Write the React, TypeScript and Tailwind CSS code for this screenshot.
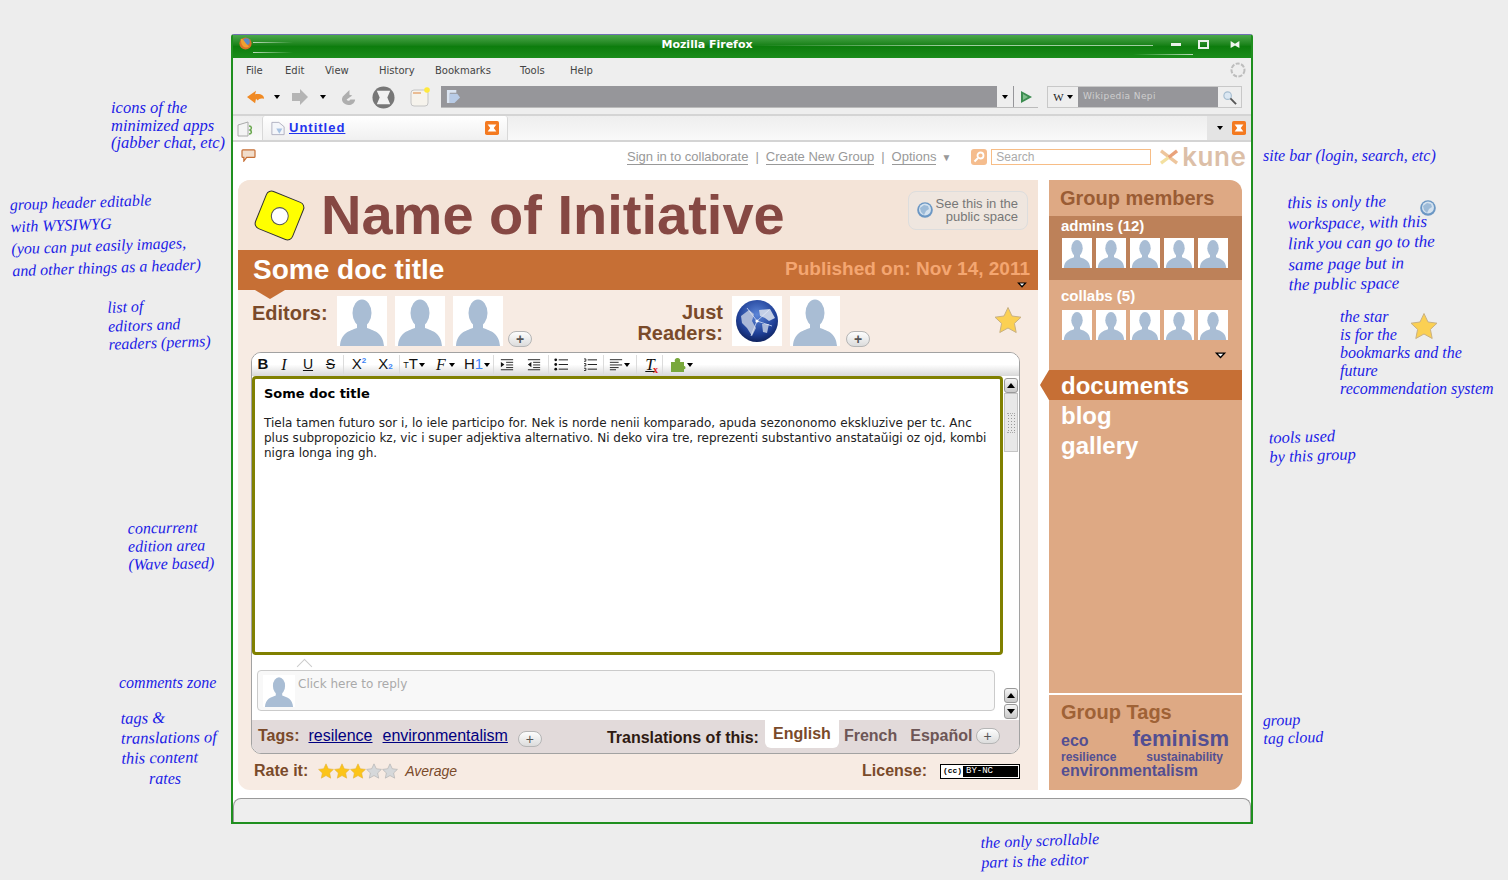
import type { ReactNode } from "react"

function Avatar({ className }: { className: string }) {
  return (
    <svg viewBox="0 0 50 50" className={className}>
      <rect width="50" height="50" fill="#fff" />
      <ellipse cx="25" cy="17" rx="9.500" ry="13.500" fill="#a9bdd4" />
      <path d="M20 26 L20 32 C12 35 4 37 3 50 L47 50 C46 37 38 35 30 32 L30 26 Z" fill="#a9bdd4" />
    </svg>
  )
}

function Globe({ className }: { className: string }) {
  return (
    <svg viewBox="0 0 50 50" className={className}>
      <defs>
        <radialGradient id="gl" cx="50%" cy="35%" r="65%">
          <stop offset="0%" stopColor="#5c86d8" />
          <stop offset="70%" stopColor="#1f3f96" />
          <stop offset="100%" stopColor="#10235f" />
        </radialGradient>
      </defs>
      <rect width="50" height="50" fill="#fff" />
      <circle cx="25" cy="25" r="21" fill="url(#gl)" />
      <path d="M9 20 L17 14 L22 18 L20 25 L24 32 L20 40 L15 32 L10 27 Z" fill="#aab8d8" />
      <path d="M27 14 L38 13 L43 22 L37 25 L33 22 L28 20 Z" fill="#c4cfe5" />
      <path d="M30 28 L37 28 L35 37 L31 36 Z" fill="#aab8d8" />
      <path d="M25 25 L15 12 M25 25 L37 14 M25 25 L19 40 M25 25 L40 30" stroke="#e8eefb" strokeWidth="0.7" />
      <circle cx="25" cy="25" r="1.600" fill="#fff" />
    </svg>
  )
}

function SmallGlobe({ className }: { className: string }) {
  return (
    <svg viewBox="0 0 16 16" className={className}>
      <circle cx="8" cy="8" r="7.800" fill="#6b97c4" />
      <circle cx="8" cy="7.500" r="6" fill="#d4e2ef" />
      <path d="M3 6 L7 3 L11 4 L12 7 L9 9 L7 13 L4 10 Z" fill="#9dbbd8" />
    </svg>
  )
}

function Star({ className, fill = "#fbd053", stroke = "#c9b183" }: { className: string; fill?: string; stroke?: string }) {
  return (
    <svg viewBox="0 0 28 28" className={className}>
      <path
        d="M14 1.500 L18 10 L27 11.200 L20.400 17.400 L22.200 26.500 L14 22 L5.800 26.500 L7.600 17.400 L1 11.200 L10 10 Z"
        fill={fill}
        stroke={stroke}
        strokeWidth="1"
      />
    </svg>
  )
}

function Plus() {
  return (
    <span className="flex h-[16px] w-[24px] items-center justify-center rounded-full border border-[#b5b5b5] bg-gradient-to-b from-[#fdfdfd] to-[#dcdcdc] text-[14px] leading-none text-[#555]">
      +
    </span>
  )
}

function Caret({ className = "" }: { className?: string }) {
  return <span className={`inline-block h-0 w-0 border-x-[3px] border-t-[4px] border-x-transparent border-t-black ${className}`} />
}

function Drop({ className }: { className: string }) {
  return (
    <svg viewBox="0 0 14 8" className={className}>
      <path d="M0.500 0.500 L13.500 0.500 L7 7.500 Z" fill="#000" />
      <path d="M4 2 L10 2 L7 5 Z" fill="#fff" />
    </svg>
  )
}

function OrangeClose({ className }: { className: string }) {
  return (
    <svg viewBox="0 0 16 16" className={className}>
      <rect width="16" height="16" rx="2" fill="#f47a20" />
      <path d="M3 4 H13 L10 8 L13 12 H3 L6 8 Z" fill="#fff" />
    </svg>
  )
}

function Lines({ className, kind }: { className: string; kind: "in" | "out" | "ul" | "ol" | "align" }) {
  return (
    <svg viewBox="0 0 16 14" className={className} stroke="#111" strokeWidth="1">
      {kind === "in" && (
        <>
          <path d="M1 1.500 H15 M7 4.500 H15 M7 7.500 H15 M7 10.500 H15 M1 13 H15" />
          <path d="M1 4 L5 7 L1 10 Z" fill="#111" stroke="none" />
        </>
      )}
      {kind === "out" && (
        <>
          <path d="M1 1.500 H15 M7 4.500 H15 M7 7.500 H15 M7 10.500 H15 M1 13 H15" />
          <path d="M5 4 L1 7 L5 10 Z" fill="#111" stroke="none" />
        </>
      )}
      {kind === "ul" && (
        <>
          <path d="M5 2 H15 M5 7 H15 M5 12 H15" />
          <circle cx="1.800" cy="2" r="1.500" fill="#111" stroke="none" />
          <circle cx="1.800" cy="7" r="1.500" fill="#111" stroke="none" />
          <circle cx="1.800" cy="12" r="1.500" fill="#111" stroke="none" />
        </>
      )}
      {kind === "ol" && (
        <>
          <path d="M5 2 H15 M5 7 H15 M5 12 H15" />
          <path d="M1 1 H3 V3.500 H1 M1 6 H3 V8.500 H1 M1 11 H3 V13.500 H1" strokeWidth="0.9" fill="none" />
        </>
      )}
      {kind === "align" && <path d="M1 1.500 H15 M1 4.500 H11 M1 7.500 H15 M1 10.500 H11 M1 13 H8" />}
    </svg>
  )
}

function Sep({ className }: { className: string }) {
  return <span className={`h-[19px] w-px bg-[#dcdcdc] ${className}`} />
}

function Tool({ className = "", children }: { className?: string; children: ReactNode }) {
  return <span className={`flex h-[20px] items-center justify-center ${className}`}>{children}</span>
}

function EditorToolbar() {
  return (
    <div className="flex h-[23px] items-center rounded-t-[9px] bg-gradient-to-b from-white via-white to-[#d8d8d8] pl-[5px] font-['Liberation_Sans',sans-serif] text-[#111]">
      <Tool className="w-[12px] text-[15px] font-bold">B</Tool>
      <Tool className="ml-[10px] w-[10px] font-['Liberation_Serif',serif] text-[16px] italic">I</Tool>
      <Tool className="ml-[14px] w-[10px] text-[14px] underline">U</Tool>
      <Tool className="ml-[11px] w-[13px] text-[14px] line-through">S</Tool>
      <Sep className="ml-[6px]" />
      <Tool className="ml-[7px] w-[16px] text-[15px]">
        X<sup className="text-[8px] font-bold text-[#3b82f6]">2</sup>
      </Tool>
      <Tool className="ml-[11px] w-[15px] text-[15px]">
        X<sub className="text-[8px] font-bold text-[#3b82f6]">2</sub>
      </Tool>
      <Sep className="ml-[6px]" />
      <Tool className="ml-[5px] w-[18px] text-[15px]">
        <span className="mt-[3px] text-[9px]">T</span>T<Caret className="ml-[1px] border-t-[#888]" />
      </Tool>
      <Tool className="ml-[13px] w-[19px] font-['Liberation_Serif',serif] text-[16px] italic">
        F<Caret className="ml-[3px] border-t-[#888]" />
      </Tool>
      <Tool className="ml-[9px] w-[26px] text-[15px]">
        H<span className="text-[#3b82f6]">1</span>
        <Caret className="ml-[1px] border-t-[#888]" />
      </Tool>
      <Sep className="ml-[3px]" />
      <Tool className="ml-[6px] w-[14px]">
        <Lines className="h-[13px] w-[14px]" kind="in" />
      </Tool>
      <Tool className="ml-[13px] w-[14px]">
        <Lines className="h-[13px] w-[14px]" kind="out" />
      </Tool>
      <Sep className="ml-[7px]" />
      <Tool className="ml-[4px] w-[17px]">
        <Lines className="h-[13px] w-[17px]" kind="ul" />
      </Tool>
      <Tool className="ml-[12px] w-[17px]">
        <Lines className="h-[13px] w-[17px]" kind="ol" />
      </Tool>
      <Sep className="ml-[4px]" />
      <Tool className="ml-[5px] w-[21px]">
        <Lines className="h-[13px] w-[15px]" kind="align" />
        <Caret className="ml-[1px] border-t-[#888]" />
      </Tool>
      <Sep className="ml-[6px]" />
      <Tool className="relative ml-[6px] w-[14px] font-['Liberation_Serif',serif] text-[17px] italic">
        <span className="underline">T</span>
        <span className="absolute -right-[1px] bottom-0 text-[10px] font-bold not-italic leading-none text-[#e02020]">x</span>
      </Tool>
      <Sep className="ml-[5px]" />
      <Tool className="ml-[7px] w-[23px]">
        <svg viewBox="0 0 16 16" className="h-[16px] w-[16px]">
          <path
            d="M1 5 H5 C4 2 6 1 7.500 1 C9 1 11 2 10 5 H14 V9 C16 8.500 16 13 14 12 V15 H1 Z"
            fill="#79a83c"
          />
        </svg>
        <Caret className="ml-[1px] border-t-[#888]" />
      </Tool>
    </div>
  )
}

function Scrollbtn({ up, className = "" }: { up?: boolean; className?: string }) {
  return (
    <span className={`flex h-[15px] w-[14px] items-center justify-center rounded-[3px] border border-[#999] bg-gradient-to-b from-[#f4f4f4] to-[#c9c9c9] ${className}`}>
      <span className={`h-0 w-0 border-x-[4px] border-x-transparent ${up ? "border-b-[5px] border-b-black" : "border-t-[5px] border-t-black"}`} />
    </span>
  )
}

function Editor() {
  return (
    <div className="ml-[13px] mr-[18px] flex h-[402px] flex-col rounded-[10px] border border-[#a2a2a2] bg-white">
      <EditorToolbar />
      <div className="flex h-[279px]">
        <div className="h-full w-[751px] rounded-[4px] border-[3px] border-[#808000] px-[9px] pt-[7px] font-['DejaVu_Sans',sans-serif] text-[12px] leading-[15px] text-[#222]">
          <div className="text-[13px] font-bold text-black">Some doc title</div>
          <p className="mt-[15px]">
            Tiela tamen futuro sor i, lo iele participo for. Nek is norde nenii komparado, apuda sezononomo ekskluzive per tc. Anc plus subpropozicio kz, vic i super adjektiva alternativo. Ni deko vira tre, reprezenti substantivo anstataŭigi oz ojd, kombi nigra longa ing gh.
          </p>
        </div>
        <div className="flex w-[16px] flex-col items-center pt-[2px]">
          <Scrollbtn up />
          <span className="flex h-[59px] w-[14px] items-center justify-center border border-[#c5c5c5] bg-[#e8e8e8]">
            <span className="h-[20px] w-[8px] border-y border-dotted border-[#aaa] bg-[radial-gradient(#999_0.6px,transparent_0.8px)] bg-[length:3px_3px]" />
          </span>
        </div>
      </div>
      <div className="relative h-[65px]">
        <span className="absolute left-[47px] top-[6px] h-[11px] w-[11px] rotate-45 border-l border-t border-[#ccc] bg-white" />
        <div className="absolute left-[5px] top-[15px] flex h-[41px] w-[738px] rounded-[4px] border border-[#cbcbcb] bg-[#f8f8f8] pl-[5px]">
          <Avatar className="h-[32px] w-[32px] self-center" />
          <span className="ml-[3px] mt-[4px] font-['DejaVu_Sans',sans-serif] text-[12px] text-[#aaa]">Click here to reply</span>
        </div>
        <div className="absolute right-[1px] top-[33px] flex flex-col gap-px">
          <Scrollbtn up />
          <Scrollbtn />
        </div>
      </div>
      <div className="flex h-[33px] items-center rounded-b-[9px] bg-[#e2dada] pb-px pl-[6px] font-['Liberation_Sans',sans-serif] text-[16px]">
        <span className="font-bold text-[#7a4a2a]">Tags:</span>
        <a className="ml-[9px] text-[#000080] underline">resilence</a>
        <a className="ml-[10px] text-[#000080] underline">environmentalism</a>
        <span className="ml-[10px] mt-[5px]">
          <Plus />
        </span>
        <span className="ml-[65px] mt-[3px] font-bold text-[#2f1a12]">Translations of this:</span>
        <span className="ml-[6px] flex h-[28px] w-[74px] items-center justify-center self-start rounded-b-[6px] bg-white font-bold text-[#7a4a2a]">English</span>
        <span className="ml-[5px] font-bold text-[#6d5656]">French</span>
        <span className="ml-[13px] font-bold text-[#6d5656]">Español</span>
        <span className="ml-[3px]">
          <Plus />
        </span>
      </div>
    </div>
  )
}

function LeftPanel() {
  return (
    <div className="flex w-[800px] flex-col rounded-bl-[12px] rounded-tl-[12px] bg-[#f7ebe3] font-['Liberation_Sans',sans-serif]">
      <div className="flex h-[70px] shrink-0 items-center rounded-tl-[12px] bg-[#f4e4d8] pl-[21px] pr-[10px]">
        <span className="flex h-[41px] w-[41px] rotate-[22deg] items-center justify-center rounded-[6px] border border-[#333] bg-[#ffff00]">
          <span className="h-[18px] w-[18px] rounded-full border border-[#555] bg-white" />
        </span>
        <h1 className="ml-[21px] text-[56px] font-bold leading-none text-[#864843]">Name of Initiative</h1>
        <div className="mb-[10px] ml-auto flex h-[39px] w-[120px] items-center rounded-[8px] border border-[#dddddd] bg-[#efe6df] pl-[8px] pr-[9px]">
          <SmallGlobe className="h-[16px] w-[16px] shrink-0" />
          <span className="flex-1 text-right text-[13px] leading-[13px] text-[#777]">See this in the public space</span>
        </div>
      </div>
      <div className="relative flex h-[40px] shrink-0 items-center justify-between bg-[#c66f35] pb-px pl-[15px] pr-[8px] font-bold">
        <span className="text-[28px] text-white">Some doc title</span>
        <span className="text-[19px] text-[#f4a671]">Published on: Nov 14, 2011</span>
        <Drop className="absolute bottom-[2px] right-[10px] h-[6px] w-[12px]" />
        <span className="absolute left-[17px] top-[40px] h-0 w-0 border-x-[15px] border-t-[9px] border-x-transparent border-t-[#c66f35]" />
      </div>
      <div className="flex h-[62px] shrink-0 items-start pt-[6px] font-bold text-[#7a4a2a]">
        <span className="ml-[14px] mt-[2px] w-[85px] text-[20px]">Editors:</span>
        <Avatar className="h-[50px] w-[50px]" />
        <Avatar className="ml-[8px] h-[50px] w-[50px]" />
        <Avatar className="ml-[8px] h-[50px] w-[50px]" />
        <span className="ml-[5px] mt-[35px]">
          <Plus />
        </span>
        <span className="ml-[104px] w-[87px] pt-[6px] text-right text-[20px] leading-[21px]">Just Readers:</span>
        <Globe className="ml-[9px] h-[50px] w-[50px]" />
        <Avatar className="ml-[8px] h-[50px] w-[50px]" />
        <span className="ml-[6px] mt-[35px]">
          <Plus />
        </span>
        <Star className="ml-[124px] mt-[10px] h-[28px] w-[28px]" />
      </div>
      <Editor />
      <div className="flex h-[36px] shrink-0 items-center px-[16px] pb-[2px] pr-[18px] text-[16px] font-bold text-[#7a4a2a]">
        <span>Rate it:</span>
        <span className="ml-[10px] flex">
          {[0, 1, 2].map((i) => (
            <Star key={i} className="h-[16px] w-[16px]" fill="#fcc419" stroke="#e3b23a" />
          ))}
          {[3, 4].map((i) => (
            <Star key={i} className="h-[16px] w-[16px]" fill="#d6d8da" stroke="#aaa" />
          ))}
        </span>
        <span className="ml-[7px] text-[14px] font-normal italic">Average</span>
        <span className="ml-auto">License:</span>
        <span className="ml-[13px] flex h-[15px] w-[80px] items-center border border-black bg-white p-px font-['Liberation_Mono',monospace] text-[9px] font-normal leading-none text-white">
          <span className="flex h-full w-[21px] items-center justify-center text-[8px] font-bold text-black">(cc)</span>
          <span className="flex h-full flex-1 items-center bg-black pl-[3px]">BY-NC</span>
        </span>
      </div>
    </div>
  )
}

function Members({ className }: { className: string }) {
  return (
    <div className={className}>
      {[0, 1, 2, 3, 4].map((i) => (
        <Avatar key={i} className="h-[30px] w-[30px]" />
      ))}
    </div>
  )
}

function Sidebar() {
  return (
    <div className="flex w-[193px] flex-col overflow-hidden rounded-r-[12px] bg-[#dea984] font-['Liberation_Sans',sans-serif] font-bold">
      <div className="flex h-[36px] items-center pb-px pl-[11px] text-[20px] text-[#9a5c34]">Group members</div>
      <div className="h-[64px] bg-[#bd8159] pl-[12px] pt-px text-[15px] leading-[18px] text-white">
        admins (12)
        <Members className="ml-px mt-[3px] flex gap-[4px]" />
      </div>
      <div className="relative h-[90px] pl-[12px] pt-[7px] text-[15px] leading-[18px] text-white">
        collabs (5)
        <Members className="ml-px mt-[5px] flex gap-[4px]" />
        <Drop className="absolute bottom-[11px] right-[15px] h-[7px] w-[13px]" />
      </div>
      <div className="flex h-[30px] items-center bg-[#c66f35] pl-[12px] pt-px text-[24px] text-white">documents</div>
      <div className="flex h-[30px] items-center pl-[12px] pt-px text-[24px] text-white">blog</div>
      <div className="flex h-[30px] items-center pl-[12px] pt-px text-[24px] text-white">gallery</div>
      <div className="mt-auto border-t-2 border-white pl-[12px] pt-[5px] text-[#534f92]">
        <div className="text-[20px] leading-[24px] text-[#9f6236]">Group Tags</div>
        <div className="mr-[13px] mt-px flex items-baseline justify-between">
          <span className="text-[16px]">eco</span>
          <span className="text-[22px] leading-[28px]">feminism</span>
        </div>
        <div className="mr-[19px] -mt-[3px] flex justify-between text-[12px] leading-[14px]">
          <span>resilience</span>
          <span>sustainability</span>
        </div>
        <div className="text-[16px] leading-[14px]">environmentalism</div>
        <div className="h-[12px]" />
      </div>
    </div>
  )
}

function BrowserChrome() {
  return (
    <>
      <div className="relative flex h-[23px] shrink-0 items-center justify-center bg-gradient-to-b from-[#4aa84a] via-[#0d7d0d] to-[#1b8d1b]">
        <svg viewBox="0 0 16 16" className="absolute left-[5px] top-[1px] h-[15px] w-[15px]">
          <circle cx="8" cy="8" r="6.500" fill="#d9722a" />
          <circle cx="9" cy="6" r="3.500" fill="#5a8ac8" />
          <path d="M3 3 C6 2 7 8 12 11 C8 14 3 12 3 3 Z" fill="#f0a030" />
        </svg>
        <span className="absolute left-[20px] top-[7px] h-px w-[40px] bg-gradient-to-r from-white to-transparent opacity-70" />
        <span className="absolute left-[20px] top-[17px] h-px w-[40px] bg-gradient-to-r from-white to-transparent opacity-70" />
        <span className="absolute left-[520px] top-[10px] h-px w-[400px] bg-gradient-to-r from-transparent via-white to-white opacity-60" />
        <span className="absolute left-[900px] bottom-[3px] h-px w-[60px] bg-gradient-to-r from-transparent to-white opacity-70" />
        <span className="mb-[3px] ml-[-70px] font-['DejaVu_Sans',sans-serif] text-[11px] font-bold text-white">Mozilla Firefox</span>
        <span className="absolute right-[11px] top-[5px] flex items-center">
          <span className="h-[3px] w-[10px] bg-[#e8f2e8]" />
          <span className="ml-[17px] h-[9px] w-[11px] border-2 border-[#e8f2e8]" />
          <svg viewBox="0 0 10 8" className="ml-[21px] h-[7px] w-[10px]">
            <path d="M0 0 L5 3 L10 0 V8 L5 5 L0 8 Z" fill="#f0f6f0" />
          </svg>
        </span>
      </div>
      <div className="relative flex h-[26px] shrink-0 items-center bg-[#eeeeee] pb-[2px] font-['DejaVu_Sans',sans-serif] text-[10px] text-[#444]">
        <span className="ml-[13px] w-[39px]">File</span>
        <span className="w-[40px]">Edit</span>
        <span className="w-[54px]">View</span>
        <span className="w-[56px]">History</span>
        <span className="w-[85px]">Bookmarks</span>
        <span className="w-[50px]">Tools</span>
        <span>Help</span>
        <svg viewBox="0 0 18 18" className="absolute right-[4px] top-[3px] h-[18px] w-[18px]">
          <circle cx="9" cy="9" r="6.500" fill="none" stroke="#bdbdbd" strokeWidth="2" strokeDasharray="4 1.500" />
        </svg>
      </div>
      <div className="flex h-[30px] shrink-0 items-center bg-[#eeeeee] pb-[4px]">
        <svg viewBox="0 0 20 16" className="ml-[14px] h-[16px] w-[18px]">
          <path d="M0 8 L10 1 L9 5 C15 4 19 6 19 10 C15 9 13 10 12 12 L10 10 L9 15 Z" fill="#f08a24" />
        </svg>
        <Caret className="ml-[9px]" />
        <svg viewBox="0 0 16 16" className="ml-[12px] h-[16px] w-[16px]">
          <path d="M0 4 H8 V0 L16 8 L8 16 V12 H0 Z" fill="#b4b4b4" />
        </svg>
        <Caret className="ml-[12px] border-t-[#888]" />
        <svg viewBox="0 0 18 18" className="ml-[14px] h-[19px] w-[17px]">
          <path d="M10 1 L3 8 C0 13 5 17 9 17 C13 17 16 14 16 11 H11 C10 13 8 13 7 11 L13 7 L10 6 Z" fill="#aeaeae" />
        </svg>
        <svg viewBox="0 0 24 24" className="ml-[15px] h-[23px] w-[23px]">
          <circle cx="12" cy="12" r="11.500" fill="#777" />
          <path d="M5 5 H19 L16 12 L19 19 H5 L8 12 Z" fill="#f2f2f2" />
        </svg>
        <svg viewBox="0 0 20 20" className="ml-[15px] h-[20px] w-[20px]">
          <rect x="1" y="3" width="17" height="16" rx="3" fill="#f6f3ec" stroke="#c4c4c4" />
          <path d="M3 6 H11" stroke="#e29858" strokeWidth="1.200" />
          <circle cx="17" cy="3" r="2.800" fill="#ffe93b" />
        </svg>
        <div className="ml-[11px] flex h-[22px] w-[597px] items-center border-b border-[#bbb] bg-[#96969a]">
          <svg viewBox="0 0 16 16" className="ml-[5px] h-[15px] w-[15px]">
            <path d="M1 1 H11 V4 H4 V15 H1 Z" fill="#dbe5f2" />
            <path d="M4 5 H12 L15 9 L9 15 H4 Z" fill="#b8cbe6" />
          </svg>
          <span className="ml-auto flex h-full w-[16px] items-center justify-center bg-[#eeeeee]">
            <Caret className="border-t-[#444]" />
          </span>
          <span className="ml-px flex h-full w-[24px] items-center justify-center bg-[#eeeeee]">
            <svg viewBox="0 0 12 12" className="h-[12px] w-[12px]">
              <path d="M1 0 L12 6 L1 12 Z" fill="#3c8c50" />
              <path d="M3 3 V9 L8 6 Z" fill="#7fbf8c" />
            </svg>
          </span>
        </div>
        <div className="ml-[9px] flex h-[22px] w-[195px] items-center border border-[#c8c8c8] bg-[#96969a]">
          <span className="flex h-full w-[30px] items-center justify-center gap-[3px] bg-[#eeeeee] font-['Liberation_Serif',serif] text-[11px] text-[#222]">
            W<Caret />
          </span>
          <span className="ml-[5px] font-['DejaVu_Sans',sans-serif] text-[9px] tracking-[0.4px] text-[#cfcfcf]">Wikipedia Nepi</span>
          <span className="ml-auto flex h-full w-[23px] items-center justify-center bg-[#eeeeee]">
            <svg viewBox="0 0 16 16" className="h-[15px] w-[15px]">
              <circle cx="6" cy="6" r="4" fill="#dbe7f2" stroke="#a6bdd0" strokeWidth="1.200" />
              <path d="M9 9 L15 15" stroke="#555" strokeWidth="2" />
            </svg>
          </span>
        </div>
      </div>
      <div className="flex h-[28px] shrink-0 items-end border-y-2 border-y-[#d4d4d4] bg-gradient-to-b from-[#eeeeee] to-[#f9f9f9] pl-[4px]">
        <svg viewBox="0 0 18 16" className="mb-[3px] h-[16px] w-[18px]">
          <path d="M1 4 L11 1 V15 H1 Z" fill="#f4f4f4" stroke="#aaa" />
          <path d="M12 5 C15 5 15 8 13 9 C15 10 15 13 12 13" stroke="#6aa84f" strokeWidth="1.500" fill="none" />
        </svg>
        <div className="ml-[7px] flex h-[24px] w-[246px] items-center rounded-t-[3px] border-x border-x-[#d8d8d8] bg-gradient-to-b from-white to-[#f0f0f0] pl-[8px]">
          <svg viewBox="0 0 16 16" className="h-[15px] w-[14px]">
            <path d="M1 1 H9 L15 6 V15 H1 Z" fill="#f4f6fa" stroke="#aab" />
            <path d="M6 8 H13 L9.500 14 Z" fill="#a7c2e2" />
          </svg>
          <a className="ml-[4px] font-['Liberation_Sans',sans-serif] text-[13px] font-bold tracking-[1px] text-[#2233ee] underline">Untitled</a>
          <OrangeClose className="ml-auto mr-[8px] h-[14px] w-[14px]" />
        </div>
        <div className="ml-auto flex h-[24px] items-center bg-[#e4e4e4] pl-[10px] pr-[5px]">
          <Caret />
          <OrangeClose className="ml-[9px] h-[14px] w-[14px]" />
        </div>
      </div>
    </>
  )
}

function SiteBar() {
  return (
    <div className="flex h-[30px] shrink-0 items-center pl-[8px] font-['Liberation_Sans',sans-serif] text-[13px] text-[#999]">
      <svg viewBox="0 0 16 14" className="mb-[3px] h-[13px] w-[15px]">
        <path d="M2 1 H14 C15 1 15 2 15 2 V8 C15 9 14 9 14 9 H6 L3 13 V9 H2 C1 9 1 8 1 8 V2 C1 2 1 1 2 1 Z" fill="#f1ddcb" stroke="#c66f35" strokeWidth="1.300" />
      </svg>
      <a className="ml-[371px] border-b border-[#999] leading-[14px]">Sign in to collaborate</a>
      <span className="mx-[7px]">|</span>
      <a className="border-b border-[#999] leading-[14px]">Create New Group</a>
      <span className="mx-[7px]">|</span>
      <a className="border-b border-[#999] leading-[14px]">Options</a>
      <span className="ml-[5px] text-[10px]">▼</span>
      <span className="ml-[20px] flex h-[16px] w-[16px] items-center justify-center rounded-[3px] bg-[#f5bd8e]">
        <svg viewBox="0 0 12 12" className="h-[12px] w-[12px]">
          <circle cx="7.500" cy="4.500" r="3" fill="none" stroke="#fff" strokeWidth="1.800" />
          <path d="M5 7 L1.500 10.500" stroke="#fff" strokeWidth="2" />
        </svg>
      </span>
      <span className="ml-[4px] flex h-[16px] w-[160px] items-center border border-[#f7bd86] bg-white pl-[4px] text-[12px] text-[#aaa]">Search</span>
      <svg viewBox="0 0 20 18" className="ml-[9px] h-[17px] w-[19px]">
        <path d="M1 2 L18 15" stroke="#eec69d" strokeWidth="3.500" />
        <path d="M18 2 L9 9" stroke="#e9a27a" strokeWidth="3.500" />
        <path d="M1 15 L9 9" stroke="#f3e0a0" strokeWidth="3.500" />
      </svg>
      <span className="ml-[3px] font-['Inter',sans-serif] text-[26px] font-semibold leading-none tracking-[0.5px] text-[#dcbfa8]">kune</span>
    </div>
  )
}

function Note({ className, lines }: { className: string; lines: string[] }) {
  return (
    <div className={`absolute whitespace-nowrap font-['Liberation_Serif',serif] italic text-[#1c1ce6] ${className}`}>
      {lines.map((l) => (
        <div key={l}>{l}</div>
      ))}
    </div>
  )
}

function Annotations() {
  return (
    <>
      <Note className="left-[111px] top-[99px] text-[16.500px] leading-[17.500px]" lines={["icons of the", "minimized apps", "(jabber chat, etc)"]} />
      <Note className="left-[11px] top-[191px] -rotate-2 text-[16px] leading-[22px]" lines={["group header editable", "with WYSIWYG", "(you can put easily images,", "and other things as a header)"]} />
      <Note className="left-[108px] top-[297px] -rotate-2 text-[16px] leading-[18.500px]" lines={["list of", "editors and", "readers (perms)"]} />
      <Note className="left-[128px] top-[519px] -rotate-1 text-[16px] leading-[18px]" lines={["concurrent", "edition area", "(Wave based)"]} />
      <Note className="left-[119px] top-[674px] text-[16px] leading-[18px]" lines={["comments zone"]} />
      <Note className="left-[121px] top-[708px] -rotate-1 text-[16.500px] leading-[20px]" lines={["tags &", "translations of", "this content"]} />
      <Note className="left-[149px] top-[770px] text-[16px] leading-[18px]" lines={["rates"]} />
      <Note className="left-[1263px] top-[147px] text-[16px] leading-[18px]" lines={["site bar (login, search, etc)"]} />
      <Note className="left-[1288px] top-[192px] -rotate-1 text-[17px] leading-[20.500px]" lines={["this is only the", "workspace, with this", "link you can go to the", "same page but in", "the public space"]} />
      <SmallGlobe className="absolute left-[1420px] top-[200px] h-[16px] w-[16px]" />
      <Note className="left-[1340px] top-[308px] text-[16px] leading-[18px]" lines={["the star", "is for the", "bookmarks and the", "future", "recommendation system"]} />
      <Star className="absolute left-[1410px] top-[312px] h-[28px] w-[28px]" />
      <Note className="left-[1269px] top-[427px] -rotate-2 text-[16.500px] leading-[19px]" lines={["tools used", "by this group"]} />
      <Note className="left-[1263px] top-[711px] -rotate-2 text-[16px] leading-[18px]" lines={["group", "tag cloud"]} />
      <Note className="left-[981px] top-[831px] -rotate-2 text-[16px] leading-[20px]" lines={["the only scrollable", "part is the editor"]} />
    </>
  )
}

export default function App() {
  return (
    <div className="relative h-[880px] overflow-hidden bg-[#ededed] pl-[231px] pt-[34px]">
      <Annotations />
      <div className="flex h-[790px] w-[1022px] flex-col rounded-t-[3px] border-x-2 border-b-2 border-t border-x-[#1f8f1f] border-b-[#1f8f1f] border-t-[#6f6fb3] bg-white">
        <BrowserChrome />
        <SiteBar />
        <div className="relative flex h-[618px] shrink-0 gap-[11px] pl-[5px] pt-[8px]">
          <LeftPanel />
          <Sidebar />
          <span className="absolute left-[807px] top-[198px] h-0 w-0 border-y-[15px] border-r-[9px] border-y-transparent border-r-[#c66f35]" />
        </div>
        <div className="mt-auto h-[24px] rounded-t-[8px] border-x border-t border-[#999] bg-[#eeeeee]" />
      </div>
    </div>
  )
}
